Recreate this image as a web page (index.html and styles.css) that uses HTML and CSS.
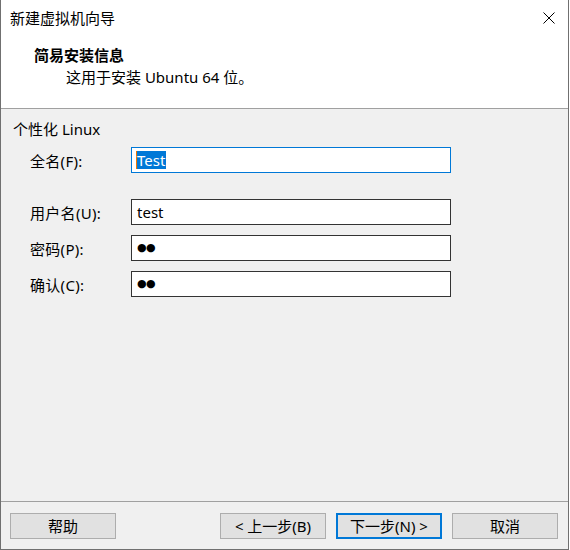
FILE: index.html
```html
<!DOCTYPE html>
<html lang="zh-CN">
<head>
<meta charset="utf-8">
<title>新建虚拟机向导</title>
<link rel="stylesheet" href="styles.css">
</head>
<body>
<div class="window">
  <div class="titlebar">
    <span class="title">新建虚拟机向导</span>
    <span class="close">
      <svg width="12" height="12" viewBox="0 0 12 12"><path d="M0.5 0.5 L11.5 11.5 M11.5 0.5 L0.5 11.5" stroke="#000" stroke-width="1" fill="none"/></svg>
    </span>
  </div>
  <div class="header">
    <div class="heading">简易安装信息</div>
    <div class="subheading">这用于安装 Ubuntu 64 位。</div>
  </div>
  <div class="main">
    <div class="group-label">个性化 Linux</div>
    <div class="form">
      <div class="label first">全名(F):</div>
      <div class="field focused first"><span class="caret"></span><span class="sel">Test</span></div>
      <div class="label">用户名(U):</div>
      <div class="field">test</div>
      <div class="label">密码(P):</div>
      <div class="field"><span class="dots">●●</span></div>
      <div class="label">确认(C):</div>
      <div class="field"><span class="dots">●●</span></div>
    </div>
  </div>
  <div class="footer">
    <button class="btn">帮助</button>
    <div class="nav">
      <button class="btn">&lt; 上一步(B)</button>
      <button class="btn default">下一步(N) &gt;</button>
      <button class="btn">取消</button>
    </div>
  </div>
</div>
</body>
</html>
```
FILE: styles.css
```css
html, body {
  margin: 0;
  padding: 0;
  background: #ffffff;
}
body {
  font-family: "Noto Sans", "Noto Sans CJK SC", sans-serif;
  font-size: 15px;
  color: #000;
}
.window {
  width: 569px;
  height: 550px;
  box-sizing: border-box;
  border: 1px solid #707070;
  border-top: none;
  display: flex;
  flex-direction: column;
  background: #f0f0f0;
}
.titlebar {
  height: 31px;
  background: #fff;
  display: flex;
  align-items: center;
  justify-content: space-between;
  padding: 0 13px 0 9px;
}
.title {
  line-height: 20px;
  padding-top: 4px;
}
.close {
  display: flex;
  padding-top: 5px;
}
.header {
  height: 78px;
  background: #fff;
  border-bottom: 1px solid #a0a0a0;
  padding: 13px 0 0 33px;
  box-sizing: border-box;
}
.heading {
  font-weight: bold;
  line-height: 22px;
}
.subheading {
  line-height: 22px;
  padding-left: 32px;
}
.main {
  flex: 1;
  padding: 10px 0 0 12px;
}
.group-label {
  line-height: 20px;
}
.form {
  display: grid;
  grid-template-columns: 101px 320px;
  row-gap: 10px;
  padding: 8px 0 0 17px;
}
.label {
  display: flex;
  align-items: center;
  height: 26px;
  letter-spacing: 0.3px;
}
.label.first, .field.first {
  margin-bottom: 16px;
}
.field {
  height: 26px;
  box-sizing: border-box;
  border: 1px solid #333;
  background: #fff;
  display: flex;
  align-items: center;
  padding-left: 5px;
  line-height: 18px;
}
.field.focused {
  border-color: #0078d7;
  padding-left: 4px;
}
.caret {
  width: 1px;
  height: 18px;
  background: #f07800;
}
.sel {
  background: #0078d7;
  color: #fff;
  height: 18px;
  padding-right: 1px;
}
.dots {
  font-family: "DejaVu Sans", sans-serif;
  font-size: 11px;
  letter-spacing: -0.5px;
}
.footer {
  height: 48px;
  border-top: 1px solid #a0a0a0;
  box-sizing: border-box;
  display: flex;
  align-items: flex-start;
  padding: 11px 10px 0 9px;
}
.nav {
  margin-left: auto;
  display: flex;
  gap: 10px;
}
.btn {
  width: 106px;
  height: 26px;
  box-sizing: border-box;
  background: #e1e1e1;
  border: 1px solid #adadad;
  font-family: inherit;
  font-size: 15px;
  color: #000;
  padding: 0;
  line-height: 20px;
}
.btn.default {
  border: 2px solid #0078d7;
}
```
